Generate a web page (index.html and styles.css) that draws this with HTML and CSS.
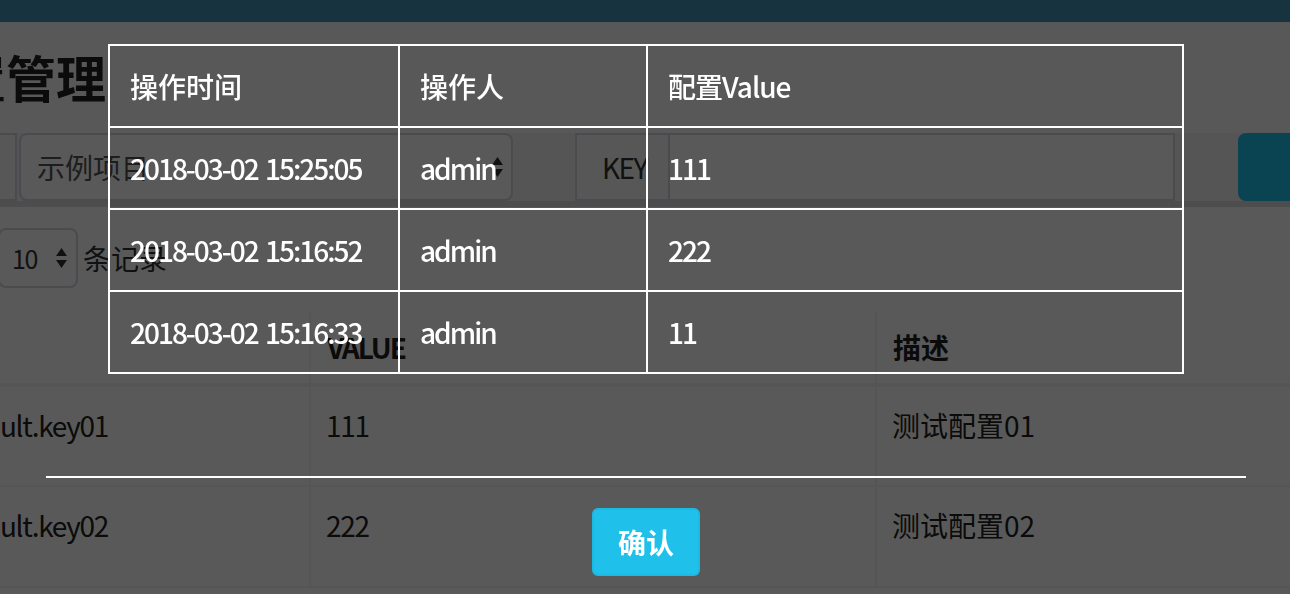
FILE: index.html
```html
<!DOCTYPE html>
<html lang="zh-CN">
<head>
<meta charset="utf-8">
<title>配置管理</title>
<link rel="stylesheet" href="styles.css">
</head>
<body>
<div class="app">
  <header class="topbar"></header>
  <main class="content">
    <h1 class="page-title">配置管理</h1>
    <section class="filter-box">
      <div class="filter-row">
        <span class="addon addon-app">AppId</span>
        <div class="select select-app">
          <span class="select-text">示例项目</span>
          <svg class="arrows" viewBox="0 0 11 22" width="11" height="22"><path d="M0 9 L5.5 1 L11 9 Z M0 13 L11 13 L5.5 21 Z"/></svg>
        </div>
        <span class="addon addon-key">KEY</span>
        <div class="input input-key"></div>
        <button class="btn-search" type="button">查询</button>
      </div>
    </section>
    <section class="table-box">
      <div class="length-row">
        <span class="length-label">显示</span>
        <div class="select select-len">
          <span class="select-text">10</span>
          <svg class="arrows" viewBox="0 0 11 22" width="11" height="22"><path d="M0 9 L5.5 1 L11 9 Z M0 13 L11 13 L5.5 21 Z"/></svg>
        </div>
        <span class="length-label length-after">条记录</span>
      </div>
      <table class="data-table">
        <thead>
          <tr><th class="dc1">KEY</th><th class="dc2">VALUE</th><th class="dc3">描述</th><th class="dc4">操作</th></tr>
        </thead>
        <tbody>
          <tr><td>default.key01</td><td>111</td><td>测试配置01</td><td></td></tr>
          <tr><td>default.key02</td><td>222</td><td>测试配置02</td><td></td></tr>
        </tbody>
      </table>
    </section>
  </main>
</div>
<div class="backdrop"></div>
<div class="modal">
  <table class="log-table">
    <thead>
      <tr><th class="lc1">操作时间</th><th class="lc2">操作人</th><th class="lc3">配置Value</th></tr>
    </thead>
    <tbody>
      <tr><td>2018-03-02 15:25:05</td><td>admin</td><td>111</td></tr>
      <tr><td>2018-03-02 15:16:52</td><td>admin</td><td>222</td></tr>
      <tr><td>2018-03-02 15:16:33</td><td>admin</td><td>11</td></tr>
    </tbody>
  </table>
  <hr class="modal-rule">
  <div class="modal-footer">
    <button class="btn-confirm" type="button">确认</button>
  </div>
</div>
</body>
</html>
```

FILE: styles.css
```css
* { box-sizing: border-box; }

html, body {
  margin: 0;
  height: 100%;
  overflow: hidden;
}

body {
  position: relative;
  font-family: "Noto Sans CJK SC", "Noto Sans", sans-serif;
  font-size: 28px;
  line-height: 40px;
  color: #333;
  background: #fbfbfc;
}

.topbar {
  height: 22px;
  background: #4592b7;
}

.content {
  margin-left: -96px;
  width: 1600px;
}

.page-title {
  margin: 28px 0 0 2px;
  font-size: 50px;
  line-height: 53px;
  font-weight: 700;
  color: #222;
}

.filter-box {
  margin-top: 30px;
  background: #f3f3f3;
  border-bottom: 6px solid #dcdcdc;
}

.filter-row {
  display: flex;
  height: 68px;
  margin-left: -34px;
}

.addon {
  display: flex;
  align-items: center;
  border: 2px solid #d2d6de;
  background: #fafafa;
  color: #333;
}

.addon-app {
  width: 147px;
  padding-left: 24px;
}

.select {
  display: flex;
  align-items: center;
  justify-content: space-between;
  border: 2px solid #d2d6de;
  border-radius: 8px;
  background: #fff;
}

.select-app {
  margin-left: 2px;
  width: 494px;
  padding: 0 8px 0 16px;
  color: #555;
}

.arrows {
  fill: #333;
  flex: none;
}

.addon-key {
  margin-left: 62px;
  width: 93px;
  padding-left: 25px;
  border-right: none;
  letter-spacing: -1.5px;
}

.input-key {
  width: 507px;
  border: 2px solid #d2d6de;
  background: #fff;
}

.btn-search {
  margin-left: 63px;
  width: 160px;
  padding-left: 70px;
  border: none;
  border-radius: 8px;
  background: #1fc1eb;
  color: #fff;
  font: inherit;
  text-align: left;
}

.table-box {
  background: #fff;
  padding: 21px 0 0 30px;
  height: 400px;
}

.length-row {
  display: flex;
  align-items: center;
}

.select-len {
  margin-left: 8px;
  width: 80px;
  height: 60px;
  padding: 0 9px 0 12px;
  color: #333;
  font-size: 25px;
  letter-spacing: -1.5px;
}

.length-after {
  margin-left: 5px;
}

.data-table {
  margin-top: 23px;
  width: 1500px;
  table-layout: fixed;
  border-collapse: collapse;
  color: #222;
}

.dc1 { width: 375px; }
.dc2 { width: 566px; }
.dc3 { width: 460px; }

.data-table th {
  padding: 16px;
  text-align: left;
  font-weight: 700;
  border-bottom: 4px solid #f2f2f2;
  border-left: 2px solid #f2f2f2;
}

.dc1,
.dc2 {
  letter-spacing: -2px;
}

.data-table th.dc1 {
  padding-left: 4px;
}

.data-table td {
  height: 101px;
  padding: 18px 16px 18px 15px;
  vertical-align: top;
  border-bottom: 2px solid #f2f2f2;
  border-left: 2px solid #f2f2f2;
}

.data-table td:nth-child(-n+2) {
  letter-spacing: -1.3px;
}

.data-table td:first-child {
  padding-left: 12px;
}

.backdrop {
  position: fixed;
  inset: 0;
  background: rgba(0, 0, 0, 0.65);
}

.modal {
  position: fixed;
  top: 0;
  left: 46px;
  width: 1200px;
  color: #fff;
}

.log-table {
  margin: 44px auto 0;
  width: 1076px;
  table-layout: fixed;
  border: 1px solid #fff;
  border-spacing: 0;
}

.log-table th,
.log-table td {
  padding: 20px;
  border: 1px solid #fff;
  text-align: left;
  font-weight: 500;
  line-height: 40px;
  white-space: nowrap;
}

.log-table td {
  letter-spacing: -2px;
  word-spacing: 3px;
}

.lc1 { width: 290px; }
.lc2 { width: 248px; }
.lc3 { width: 536px; letter-spacing: -1px; }

.modal-rule {
  margin: 102px 0 0;
  height: 0;
  border: 0;
  border-top: 2px solid #fff;
}

.modal-footer {
  padding-top: 30px;
  text-align: center;
}

.btn-confirm {
  width: 108px;
  height: 68px;
  padding: 12px 0;
  border: 2px solid #1cb9e2;
  border-radius: 6px;
  background: #1fc1eb;
  color: #fff;
  font: inherit;
  font-weight: 700;
  line-height: 40px;
}
```
